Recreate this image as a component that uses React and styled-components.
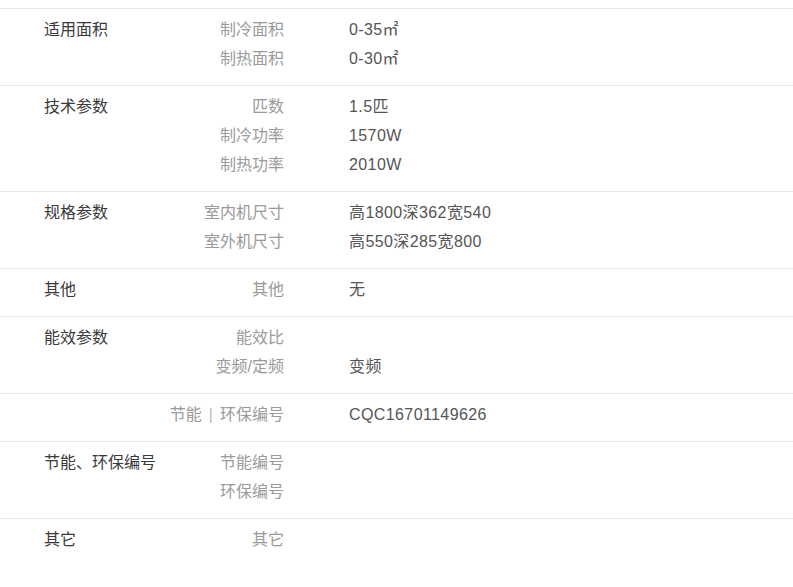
import styled, { createGlobalStyle } from 'styled-components';

const GlobalStyle = createGlobalStyle`
  html, body {
    margin: 0;
    background: #fff;
  }
  body {
    font-family: "Liberation Sans", "Noto Sans CJK SC", sans-serif;
    font-size: 16px;
  }
`;

const Table = styled.div`
  padding-top: 8px;
`;

const Group = styled.div`
  display: flex;
  border-top: 1px solid #e8e8e8;
  padding: 6px 0 12px 44px;
  line-height: 29px;
`;

const Title = styled.div`
  width: 120px;
  flex: none;
  color: #3a3a3a;
`;

const Pairs = styled.div`
  display: flex;
  flex-direction: column;
`;

const Pair = styled.div`
  display: grid;
  grid-template-columns: 120px 1fr;
  column-gap: 65px;
  height: 29px;
`;

const Label = styled.div`
  text-align: right;
  color: #9a9a9a;
  white-space: nowrap;
`;

const Value = styled.div`
  color: #555;
  letter-spacing: 0.4px;
  white-space: nowrap;
`;

const Sep = styled.span`
  color: #bbb;
  margin: 0 7px;
`;

const specs = [
  {
    title: '适用面积',
    items: [
      ['制冷面积', '0-35㎡'],
      ['制热面积', '0-30㎡'],
    ],
  },
  {
    title: '技术参数',
    items: [
      ['匹数', '1.5匹'],
      ['制冷功率', '1570W'],
      ['制热功率', '2010W'],
    ],
  },
  {
    title: '规格参数',
    items: [
      ['室内机尺寸', '高1800深362宽540'],
      ['室外机尺寸', '高550深285宽800'],
    ],
  },
  { title: '其他', items: [['其他', '无']] },
  {
    title: '能效参数',
    items: [
      ['能效比', ''],
      ['变频/定频', '变频'],
    ],
  },
  {
    title: '',
    items: [
      [
        <>
          节能<Sep>|</Sep>环保编号
        </>,
        'CQC16701149626',
      ],
    ],
  },
  {
    title: '节能、环保编号',
    items: [
      ['节能编号', ''],
      ['环保编号', ''],
    ],
  },
  { title: '其它', items: [['其它', '']] },
];

export default function App() {
  return (
    <>
      <GlobalStyle />
      <Table>
        {specs.map((group, i) => (
          <Group key={i}>
            <Title>{group.title}</Title>
            <Pairs>
              {group.items.map(([label, value], j) => (
                <Pair key={j}>
                  <Label>{label}</Label>
                  <Value>{value}</Value>
                </Pair>
              ))}
            </Pairs>
          </Group>
        ))}
      </Table>
    </>
  );
}
